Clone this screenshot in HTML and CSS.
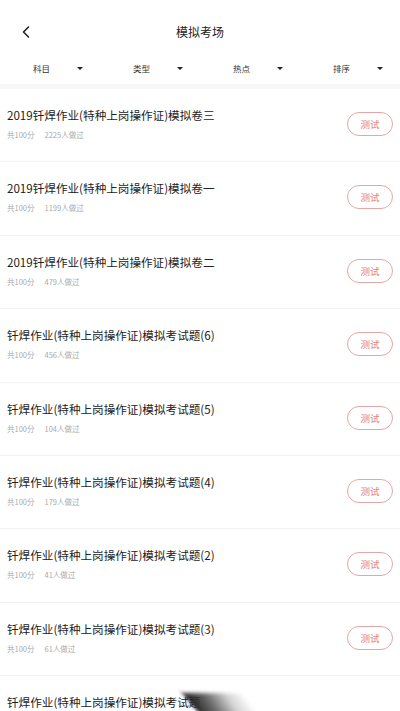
FILE: index.html
```html
<!DOCTYPE html>
<html lang="zh">
<head>
    <meta charset="UTF-8">
    <meta name="viewport" content="width=device-width, initial-scale=1.0">
    <title>模拟考场</title>
    <link rel="stylesheet" href="styles.css">
</head>
<body>
    <!-- Top Bar -->
    <div class="top-bar">
        <span class="back-btn">
            <svg width="10" height="12" viewBox="0 0 10 12"><path d="M7.5 1 L2.5 6 L7.5 11" fill="none" stroke="#222" stroke-width="1.6" stroke-linecap="round" stroke-linejoin="round"/></svg>
        </span>
        <div class="page-title">模拟考场</div>
    </div>
    <!-- Filter Row -->
    <div class="filter-row">
        <div class="filter-item"><span>科目</span><i class="caret"></i></div>
        <div class="filter-item"><span>类型</span><i class="caret"></i></div>
        <div class="filter-item"><span>热点</span><i class="caret"></i></div>
        <div class="filter-item"><span>排序</span><i class="caret"></i></div>
    </div>
    <div class="divider-band"></div>
    <!-- Exam List -->
    <div class="exam-list">
        <div class="exam-item">
            <div class="exam-info">
                <div class="exam-title">2019钎焊作业(特种上岗操作证)模拟卷三</div>
                <div class="exam-meta"><span>共100分</span><span>2225人做过</span></div>
            </div>
            <button class="test-btn">测试</button>
        </div>
        <div class="exam-item">
            <div class="exam-info">
                <div class="exam-title">2019钎焊作业(特种上岗操作证)模拟卷一</div>
                <div class="exam-meta"><span>共100分</span><span>1199人做过</span></div>
            </div>
            <button class="test-btn">测试</button>
        </div>
        <div class="exam-item">
            <div class="exam-info">
                <div class="exam-title">2019钎焊作业(特种上岗操作证)模拟卷二</div>
                <div class="exam-meta"><span>共100分</span><span>479人做过</span></div>
            </div>
            <button class="test-btn">测试</button>
        </div>
        <div class="exam-item">
            <div class="exam-info">
                <div class="exam-title">钎焊作业(特种上岗操作证)模拟考试题(6)</div>
                <div class="exam-meta"><span>共100分</span><span>456人做过</span></div>
            </div>
            <button class="test-btn">测试</button>
        </div>
        <div class="exam-item">
            <div class="exam-info">
                <div class="exam-title">钎焊作业(特种上岗操作证)模拟考试题(5)</div>
                <div class="exam-meta"><span>共100分</span><span>104人做过</span></div>
            </div>
            <button class="test-btn">测试</button>
        </div>
        <div class="exam-item">
            <div class="exam-info">
                <div class="exam-title">钎焊作业(特种上岗操作证)模拟考试题(4)</div>
                <div class="exam-meta"><span>共100分</span><span>179人做过</span></div>
            </div>
            <button class="test-btn">测试</button>
        </div>
        <div class="exam-item">
            <div class="exam-info">
                <div class="exam-title">钎焊作业(特种上岗操作证)模拟考试题(2)</div>
                <div class="exam-meta"><span>共100分</span><span>41人做过</span></div>
            </div>
            <button class="test-btn">测试</button>
        </div>
        <div class="exam-item">
            <div class="exam-info">
                <div class="exam-title">钎焊作业(特种上岗操作证)模拟考试题(3)</div>
                <div class="exam-meta"><span>共100分</span><span>61人做过</span></div>
            </div>
            <button class="test-btn">测试</button>
        </div>
        <div class="exam-item last">
            <div class="exam-info">
                <div class="exam-title">钎焊作业(特种上岗操作证)模拟考试题</div>
            </div>
        </div>
    </div>
    <!-- page curl shadow at the bottom -->
    <div class="curl-shadow"></div>
</body>
</html>
```

FILE: styles.css
```css
/* Global Styling */
body {
    margin: 0;
    background-color: #ffffff;
    font-family: "Noto Sans CJK SC", "Noto Sans", sans-serif;
    color: #222;
    height: 711px;
    overflow: hidden;
    position: relative;
}
/* Top Bar */
.top-bar {
    height: 50px;
    display: flex;
    align-items: center;
    justify-content: center;
    position: relative;
    padding-top: 14px;
    box-sizing: border-box;
}
.back-btn {
    position: absolute;
    left: 21px;
    top: 26px;
    display: flex;
}
.page-title {
    font-size: 12px;
    line-height: 16px;
    color: #222;
}
/* Filter Row */
.filter-row {
    display: flex;
    height: 34px;
    align-items: center;
}
.filter-item {
    flex: 1;
    display: flex;
    align-items: center;
    padding-left: 33px;
    font-size: 8.5px;
    color: #333;
    padding-top: 2px;
}
.caret {
    margin-left: 27px;
    width: 0;
    height: 0;
    border-left: 3px solid transparent;
    border-right: 3px solid transparent;
    border-top: 3.5px solid #222;
}
.divider-band {
    height: 5px;
    background-color: #f7f7f7;
}
/* Exam List */
.exam-item {
    height: 73.4px;
    box-sizing: border-box;
    border-bottom: 1px solid #f2f2f2;
    display: flex;
    align-items: flex-start;
    justify-content: space-between;
    padding: 16px 7px 0 7px;
}
.exam-item.last {
    height: 40px;
    border-bottom: none;
}
.exam-title {
    font-size: 11.6px;
    line-height: 20px;
    color: #222;
    white-space: nowrap;
}
.exam-meta {
    margin-top: 4px;
    font-size: 7.5px;
    line-height: 12px;
    color: #aaa;
    display: flex;
    gap: 10px;
}
.test-btn {
    margin-top: 7px;
    width: 46px;
    height: 24px;
    border: 1px solid #e6a6a6;
    border-radius: 12px;
    background-color: #fff;
    color: #e57c7c;
    font-family: inherit;
    font-size: 9.5px;
    padding: 0;
}
/* Curl shadow overlay */
.curl-shadow {
    position: absolute;
    left: 192px;
    top: 693px;
    width: 58px;
    height: 24px;
    background: linear-gradient(100deg, rgba(30, 30, 30, 1) 0%, rgba(70, 70, 70, 0.8) 35%, rgba(150, 150, 150, 0.4) 70%, rgba(255, 255, 255, 0) 100%);
    transform: skewX(40deg);
    filter: blur(2px);
}
```
